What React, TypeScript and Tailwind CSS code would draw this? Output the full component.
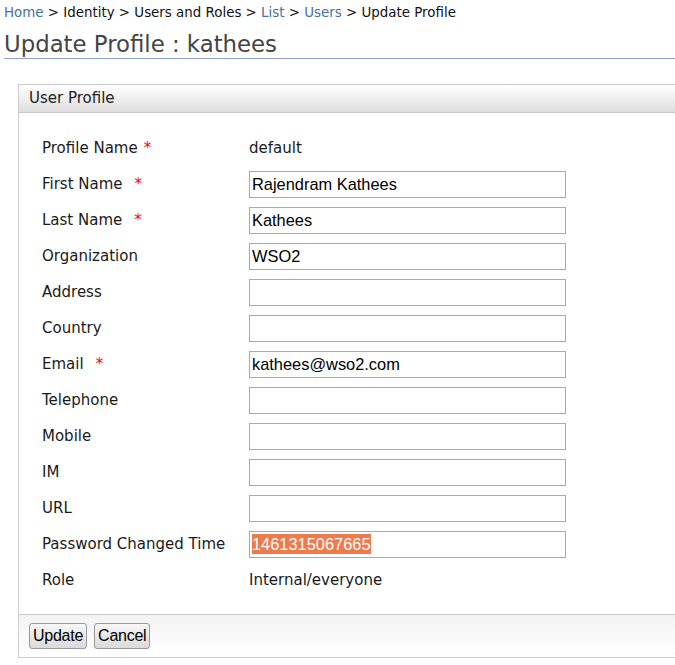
import React from "react";

const verdana = { fontFamily: '"DejaVu Sans", Verdana, sans-serif' };
const arial = { fontFamily: '"Liberation Sans", Arial, sans-serif' };

type Row = { label: string; req?: boolean; gap?: boolean; kind: "text" | "input"; value?: string; selected?: boolean };

const rows: Row[] = [
  { label: "Profile Name", req: true, kind: "text", value: "default" },
  { label: "First Name", req: true, gap: true, kind: "input", value: "Rajendram Kathees" },
  { label: "Last Name", req: true, gap: true, kind: "input", value: "Kathees" },
  { label: "Organization", kind: "input", value: "WSO2" },
  { label: "Address", kind: "input", value: "" },
  { label: "Country", kind: "input", value: "" },
  { label: "Email", req: true, gap: true, kind: "input", value: "kathees@wso2.com" },
  { label: "Telephone", kind: "input", value: "" },
  { label: "Mobile", kind: "input", value: "" },
  { label: "IM", kind: "input", value: "" },
  { label: "URL", kind: "input", value: "" },
  { label: "Password Changed Time", kind: "input", value: "1461315067665", selected: true },
  { label: "Role", kind: "text", value: "Internal/everyone" },
];

export default function App() {
  return (
    <div className="w-[675px] h-[665px] overflow-hidden bg-white text-[#222]" style={verdana}>
      <div className="pl-1 pt-[5px] text-[13.4px] leading-[16px] whitespace-nowrap text-[#111]">
        <span className="text-[#4a6fa0]">Home</span> &gt; Identity &gt; Users and Roles &gt;{" "}
        <span className="text-[#4a6fa0]">List</span> &gt; <span className="text-[#4a6fa0]">Users</span> &gt; Update Profile
      </div>
      <div className="ml-1 mt-[9px] pb-0 border-b border-[#8ea4cb] text-[22.8px] leading-[28px] text-[#444] whitespace-nowrap">
        Update Profile : kathees
      </div>
      <div className="ml-[18px] mt-[25px] w-[700px] border border-[#cccccc]">
        <div className="h-[28px] flex items-center pl-[10px] border-b border-[#c8c8c8] bg-gradient-to-b from-[#ffffff] to-[#dedede] text-[15px] text-[#222]">
          User Profile
        </div>
        <div className="pt-[17px] pb-[16px] pl-[23px]">
          {rows.map((r) => (
            <div key={r.label} className="flex items-center h-[36px]">
              <div className="w-[207px] text-[15px] text-[#1a1a1a] whitespace-nowrap">
                {r.label}
                {r.req && <span className={`text-[#ff0000] ${r.gap ? "ml-[12px]" : "ml-[6px]"}`}>*</span>}
              </div>
              {r.kind === "text" ? (
                <div className="text-[15px] text-[#1a1a1a]">{r.value}</div>
              ) : (
                <div
                  className="w-[317px] h-[27px] border border-[#a9a9a9] bg-white flex items-center pl-[2px] text-[16.4px] text-black"
                  style={arial}
                >
                  {r.selected ? (
                    <span className="bg-[#ee7b4d] text-white leading-[20px]">{r.value}</span>
                  ) : (
                    <span className="leading-[20px]">{r.value}</span>
                  )}
                </div>
              )}
            </div>
          ))}
        </div>
        <div className="border-t border-[#cccccc] bg-gradient-to-b from-[#f3f3f3] to-[#ffffff] h-[43px] flex items-center pl-[10px] gap-[7px]">
          {["Update", "Cancel"].map((b) => (
            <button
              key={b}
              className="h-[26px] px-[3px] border border-[#9a9a9a] rounded-[3px] bg-gradient-to-b from-[#f7f7f7] to-[#dadada] text-[16px] tracking-[-0.25px] text-black leading-none"
              style={arial}
            >
              {b}
            </button>
          ))}
        </div>
      </div>
    </div>
  );
}
